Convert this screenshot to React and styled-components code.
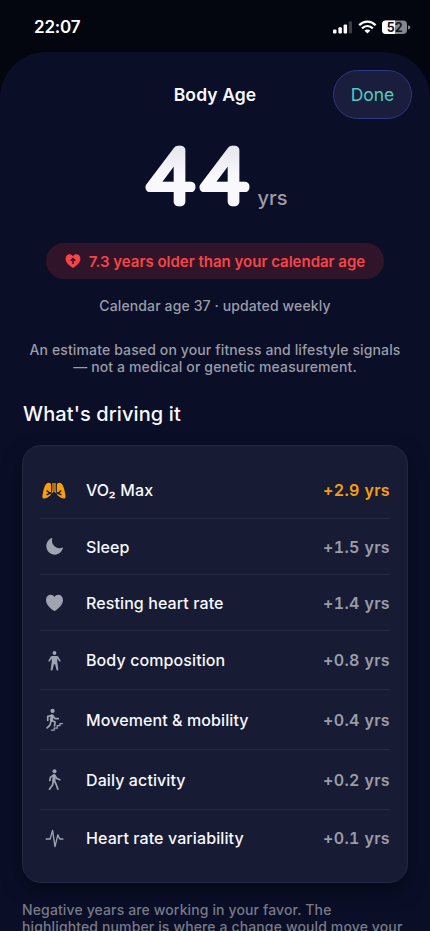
import React from "react";
import styled, { createGlobalStyle } from "styled-components";

const drivers = [
  { name: "VO₂ Max", value: "+2.9 yrs", icon: "lungs", height: 57, active: true },
  { name: "Sleep", value: "+1.5 yrs", icon: "moon", height: 56 },
  { name: "Resting heart rate", value: "+1.4 yrs", icon: "heart", height: 56 },
  { name: "Body composition", value: "+0.8 yrs", icon: "body", height: 59 },
  { name: "Movement & mobility", value: "+0.4 yrs", icon: "stairs", height: 60 },
  { name: "Daily activity", value: "+0.2 yrs", icon: "walk", height: 60 },
  { name: "Heart rate variability", value: "+0.1 yrs", icon: "pulse", height: 56 },
];

const icons = {
  lungs: (
    <>
      <path
        d="M4.6 3.600C6.300 2.200 9 2.700 9.100 5v8.200c0 1.500-1 2.400-2.600 3.600-1.500 1.100-3.600 2.100-5.100 1.600C.1 18 .3 15.900.8 13.700c.6-3.500 1.800-8.400 3.800-10.100Z"
        fill="currentColor"
      />
      <path
        d="M19.400 3.600C17.700 2.200 15 2.700 14.900 5v8.200c0 1.500 1 2.400 2.600 3.600 1.500 1.100 3.600 2.100 5.100 1.600 1.300-.4 1.100-2.500.6-4.700-.6-3.500-1.800-8.400-3.800-10.100Z"
        fill="currentColor"
      />
      <path d="M11 3v8.500L8.500 13.600M13 3v8.500l2.500 2.100" fill="none" stroke="currentColor" strokeWidth="1.300" />
      <path
        d="M9.800 12.500 7.800 13.300 4.800 10.500M7.800 13.300 4.600 14.900M14.200 12.500l2 .8 3-2.800M16.200 13.300l3.200 1.600"
        fill="none"
        stroke="#171b34"
        strokeWidth="1.500"
      />
    </>
  ),
  moon: (
    <path
      d="M9.600 3.600C8.400 8.600 11.800 13.800 17.500 13.700c1 0 2-.2 2.900-.6.400-.1.600.1.500.5-1.200 3.900-4.400 6.900-8.400 6.900C7.500 20.500 3.500 16.500 3.500 11.700 3.500 7.900 5.800 4.700 9.100 3.200c.4-.1.600 0 .5.400Z"
      fill="currentColor"
    />
  ),
  heart: (
    <path
      d="M12 20.800c-.4 0-.9-.3-1.400-.7C6.200 17 3.200 13.400 3.200 9.600c0-3.300 2.100-5.600 4.800-5.600 1.700 0 3.200.8 4 2.300.8-1.500 2.300-2.300 4-2.300 2.700 0 4.800 2.300 4.800 5.600 0 3.800-3 7.400-7.400 10.500-.5.400-1 .7-1.400.7Z"
      fill="currentColor"
    />
  ),
  body: (
    <>
      <circle cx="12" cy="4.200" r="2" fill="currentColor" />
      <path
        d="M9.500 7.400h5c.6 0 1.100.3 1.500.8l2.300 3.700c.5 1-.7 1.700-1.300.9l-2.200-2.900.2 4.200 1 7.200c.1 1.400-1.600 1.600-1.900.3L12.600 16h-1.200l-1.500 5.600c-.3 1.300-2 1.100-1.900-.3l1-7.200.2-4.200L7 12.800c-.6.8-1.800.1-1.300-.9L8 8.200c.4-.5.900-.8 1.500-.8Z"
        fill="currentColor"
      />
    </>
  ),
  stairs: (
    <>
      <circle cx="10" cy="3" r="2.200" fill="currentColor" />
      <path
        d="M9 7.800 5 8.800v4"
        fill="none"
        stroke="currentColor"
        strokeWidth="1.800"
        strokeLinecap="round"
        strokeLinejoin="round"
      />
      <path d="M9.400 8.200 8.800 12.600" stroke="currentColor" strokeWidth="3.400" strokeLinecap="round" />
      <path
        d="m10.500 8.500 2 2.500h3.400M9.300 13.100l3.300 1.600-.6 4M8.300 14.200l-1 3.600-3 3"
        fill="none"
        stroke="currentColor"
        strokeWidth="1.800"
        strokeLinecap="round"
        strokeLinejoin="round"
      />
      <path d="M8.200 23h3.500v-2h3.200v-2.500h2.800v-2.200h3" fill="none" stroke="currentColor" strokeWidth="1.300" />
    </>
  ),
  walk: (
    <>
      <circle cx="12" cy="3.300" r="2.100" fill="currentColor" />
      <path d="m11.600 8-.2 5" stroke="currentColor" strokeWidth="3.400" strokeLinecap="round" />
      <path
        d="M11 7.500 7.900 9.500 7.100 13M12.500 8l1.900 3 3.200 1.200M11.900 13.500l1.900 3.700 1.700 4.900M10.700 13.500l-.6 4-3.300 4.600"
        fill="none"
        stroke="currentColor"
        strokeWidth="1.800"
        strokeLinecap="round"
        strokeLinejoin="round"
      />
    </>
  ),
  pulse: (
    <path
      d="M3.300 12.500h4.200L10 3.500l2.500 17 3-12.300 2 4.300h3.300"
      fill="none"
      stroke="currentColor"
      strokeWidth="1.400"
      strokeLinecap="round"
      strokeLinejoin="round"
    />
  ),
};

const StatusIcons = () => (
  <StatusSvg width="78" height="16" viewBox="0 0 78 16">
    <rect x="0" y="9.500" width="3.500" height="4" rx="1" fill="#fff" />
    <rect x="5.400" y="7.200" width="3.500" height="6.300" rx="1" fill="#fff" />
    <rect x="10.600" y="4.500" width="3.500" height="9" rx="1" fill="#fff" />
    <rect x="15.800" y="1.300" width="3.200" height="12.200" rx="1" fill="#3b3e47" />
    <path d="M26.200 5.200c4.700-4.700 11.700-4.700 16.400 0" fill="none" stroke="#fff" strokeWidth="2.300" />
    <path d="M29 8.400c3.200-3 7.600-3 10.800 0" fill="none" stroke="#fff" strokeWidth="2.200" />
    <path d="M31.400 10.600c1.800-1.500 4.200-1.500 6 0l-3 3Z" fill="#fff" />
    <rect x="49" y=".5" width="25" height="13.500" rx="4" fill="#85878d" />
    <path d="M62 .5v13.500h-9a4 4 0 0 1-4-4V4.500a4 4 0 0 1 4-4Z" fill="#fff" />
    <path d="M75 5.200c1.700.5 2.300 1.200 2.300 2.100s-.6 1.600-2.300 2.100Z" fill="#85878d" />
    <BatteryText x="61.700" y="11.600" textAnchor="middle">
      52
    </BatteryText>
  </StatusSvg>
);

const App = () => {
  return (
    <Screen>
      <GlobalStyle />
      <StatusBar>
        <Time>22:07</Time>
        <StatusIcons />
      </StatusBar>
      <Sheet>
        <Header>
          <Title>Body Age</Title>
          <Done>Done</Done>
        </Header>
        <AgeRow>
          <AgeSvg width="106" height="64" viewBox="0 0 106 64">
            <defs>
              <linearGradient id="age" gradientUnits="userSpaceOnUse" x1="0" y1="0" x2="0" y2="64">
                <stop offset="0" stopColor="#e4e4ec" />
                <stop offset=".5" stopColor="#f8f8fd" />
              </linearGradient>
            </defs>
            <AgeText x="3.500 51.700" y="57.500" transform="scale(1.120 1)">
              44
            </AgeText>
          </AgeSvg>
          <Unit>yrs</Unit>
        </AgeRow>
        <Pill>
          <svg width="16" height="16" viewBox="0 0 16 16">
            <path
              d="M8 15C4.200 12.700.6 9.600.6 5.800.6 3.200 2.300 1.300 4.500 1.300 6 1.300 7.300 2 8 3.300 8.700 2 10 1.300 11.500 1.300c2.200 0 3.900 1.900 3.900 4.500C15.400 9.600 11.800 12.700 8 15Z"
              fill="#f84446"
            />
            <path d="M8 11V6M5.700 7.800 8 5.500l2.300 2.300" fill="none" stroke="#30152a" strokeWidth="1.500" />
          </svg>
          <span>7.3 years older than your calendar age</span>
        </Pill>
        <Calendar>Calendar age 37 · updated weekly</Calendar>
        <Disclaimer>
          An estimate based on your fitness and lifestyle signals
          <br />— not a medical or genetic measurement.
        </Disclaimer>
        <Heading>What's driving it</Heading>
        <Card>
          {drivers.map((props) => (
            <Row key={props.name} $height={props.height}>
              <IconBox $active={props.active}>
                {props.active ? (
                  <svg width="24" height="17" viewBox="0 2 24 17">
                    {icons[props.icon]}
                  </svg>
                ) : (
                  <svg width="23" height="23" viewBox="0 0 24 24">
                    {icons[props.icon]}
                  </svg>
                )}
              </IconBox>
              <Name>{props.name}</Name>
              <Value $active={props.active}>{props.value}</Value>
            </Row>
          ))}
        </Card>
        <Footnote>
          Negative years are working in your favor. The
          <br />
          highlighted number is where a change would move your
        </Footnote>
      </Sheet>
    </Screen>
  );
};

export default App;

const GlobalStyle = createGlobalStyle`
  body {
    margin: 0;
    background: #03050f;
  }

  * {
    box-sizing: border-box;
  }
`;

const Screen = styled.div`
  width: 430px;
  height: 931px;
  overflow: hidden;
  display: flex;
  flex-direction: column;
  background: #03050f;
  color: #f8f8fd;
  font-family: Inter, "Liberation Sans", sans-serif;
`;

const StatusBar = styled.div`
  height: 52px;
  flex-shrink: 0;
  display: flex;
  align-items: flex-start;
  justify-content: space-between;
  padding: 17px 19px 0 34px;
`;

const Time = styled.div`
  font-size: 17px;
  line-height: 21px;
  font-weight: 600;
  letter-spacing: -0.2px;
  color: #fff;
`;

const StatusSvg = styled.svg`
  margin-top: 3px;
`;

const BatteryText = styled.text`
  font-size: 12.5px;
  font-weight: 700;
  fill: #14161f;
`;

const Sheet = styled.div`
  flex: 1;
  min-height: 0;
  overflow: hidden;
  display: flex;
  flex-direction: column;
  align-items: center;
  background: #0a0e27;
  border-radius: 46px 46px 0 0;
`;

const Header = styled.div`
  width: 100%;
  height: 67px;
  flex-shrink: 0;
  padding: 17px 18px 0 0;
  display: grid;
  grid-template-columns: 1fr 84px 76px 79px;
  align-items: center;
`;

const Title = styled.div`
  grid-column: 2;
  text-align: center;
  white-space: nowrap;
  font-size: 17.5px;
  font-weight: 600;
  letter-spacing: 0.1px;
`;

const Done = styled.button`
  grid-column: 4;
  height: 49px;
  padding: 0;
  border: 1px solid #2e3a82;
  border-radius: 25px;
  background: #1a1d3b;
  color: #4ecdc4;
  font-family: inherit;
  font-size: 17.5px;
`;

const AgeRow = styled.div`
  height: 64px;
  margin-top: 25px;
  padding-left: 1px;
  display: flex;
  align-items: flex-end;
  gap: 8px;
  flex-shrink: 0;
`;

const AgeSvg = styled.svg`
  overflow: visible;
`;

const AgeText = styled.text`
  font-family: Roboto, sans-serif;
  font-size: 73px;
  font-weight: 100;
  fill: url(#age);
  stroke: url(#age);
  stroke-width: 8.4px;
  stroke-linejoin: round;
`;

const Unit = styled.div`
  font-size: 20px;
  line-height: 20px;
  font-weight: 500;
  color: #9a9ca8;
`;

const Pill = styled.div`
  width: 338px;
  height: 36px;
  margin-top: 35px;
  flex-shrink: 0;
  display: flex;
  align-items: center;
  justify-content: center;
  gap: 8px;
  border-radius: 18px;
  background: #30152a;
  color: #f84446;
  font-size: 15px;
  font-weight: 600;
  white-space: nowrap;
`;

const Calendar = styled.div`
  margin-top: 18px;
  font-size: 14px;
  line-height: 18px;
  font-weight: 450;
  letter-spacing: 0.12px;
  color: #9a9ca8;
`;

const Disclaimer = styled.div`
  margin-top: 26px;
  text-align: center;
  white-space: nowrap;
  font-size: 14px;
  line-height: 17px;
  font-weight: 450;
  letter-spacing: 0.13px;
  color: #9a9ca8;
`;

const Heading = styled.div`
  width: 100%;
  margin-top: 26px;
  padding-left: 23px;
  font-size: 20px;
  line-height: 26px;
  font-weight: 550;
  letter-spacing: 0.1px;
`;

const Card = styled.div`
  width: 386px;
  height: 438px;
  margin-top: 18px;
  padding: 16px 17px 0;
  flex-shrink: 0;
  border: 1px solid #242843;
  border-radius: 19px;
  background: #171b34;
  box-shadow: 0 8px 20px rgba(0, 0, 0, 0.35);
`;

const Row = styled.div`
  height: ${({ $height }) => $height}px;
  display: flex;
  align-items: center;
  border-bottom: 1px solid #25293f;

  &:last-child {
    border-bottom: 0;
  }
`;

const IconBox = styled.div`
  width: 28px;
  margin-right: 18px;
  display: flex;
  justify-content: center;
  color: ${({ $active }) => ($active ? "#f99f0b" : "#a0a3b0")};
`;

const Name = styled.div`
  flex: 1;
  font-size: 16px;
  font-weight: 500;
  letter-spacing: 0.1px;
`;

const Value = styled.div`
  font-size: 16px;
  font-weight: 600;
  font-variant-numeric: tabular-nums;
  letter-spacing: 0.35px;
  color: ${({ $active }) => ($active ? "#f99f0b" : "#9a9ca8")};
`;

const Footnote = styled.div`
  width: 100%;
  margin-top: 18px;
  padding-left: 22px;
  flex-shrink: 0;
  white-space: nowrap;
  font-size: 14px;
  line-height: 17px;
  font-weight: 450;
  letter-spacing: 0.13px;
  color: #777a87;
`;
